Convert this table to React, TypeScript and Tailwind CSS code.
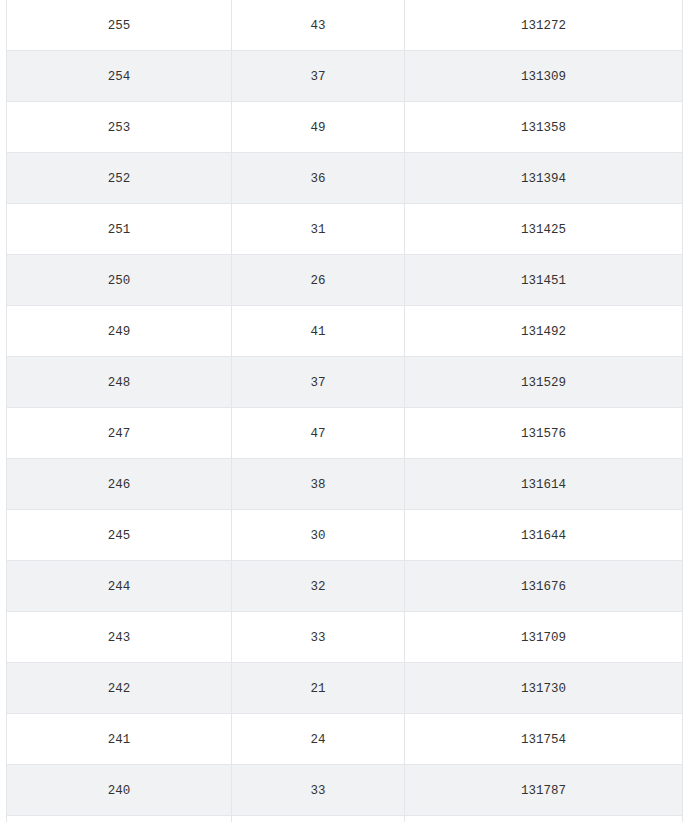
const rows: [number, number, number][] = [
  [255, 43, 131272],
  [254, 37, 131309],
  [253, 49, 131358],
  [252, 36, 131394],
  [251, 31, 131425],
  [250, 26, 131451],
  [249, 41, 131492],
  [248, 37, 131529],
  [247, 47, 131576],
  [246, 38, 131614],
  [245, 30, 131644],
  [244, 32, 131676],
  [243, 33, 131709],
  [242, 21, 131730],
  [241, 24, 131754],
  [240, 33, 131787],
];

export default function App() {
  return (
    <div className="h-[822px] w-[685px] overflow-hidden bg-white">
      <div className="ml-[6px] w-[677px] border-x border-[#e4e6ea] font-['Liberation_Mono',monospace] text-[12.5px] text-[#333]">
        {rows.map(([score, count, total], i) => (
          <div
            key={score}
            className={`flex h-[51px] border-b border-[#e4e6ea] ${i % 2 === 1 ? "bg-[#f1f2f4]" : "bg-white"}`}
          >
            <div className="flex w-[225px] items-center justify-center border-r border-[#e4e6ea] pt-[3px]">{score}</div>
            <div className="flex w-[173px] items-center justify-center border-r border-[#e4e6ea] pt-[3px]">{count}</div>
            <div className="flex flex-1 items-center justify-center pt-[3px]">{total}</div>
          </div>
        ))}
        {/* next row, only its top edge is in view */}
        <div className="flex h-[51px] bg-white">
          <div className="w-[225px] border-r border-[#e4e6ea]" />
          <div className="w-[173px] border-r border-[#e4e6ea]" />
          <div className="flex-1" />
        </div>
      </div>
    </div>
  );
}
